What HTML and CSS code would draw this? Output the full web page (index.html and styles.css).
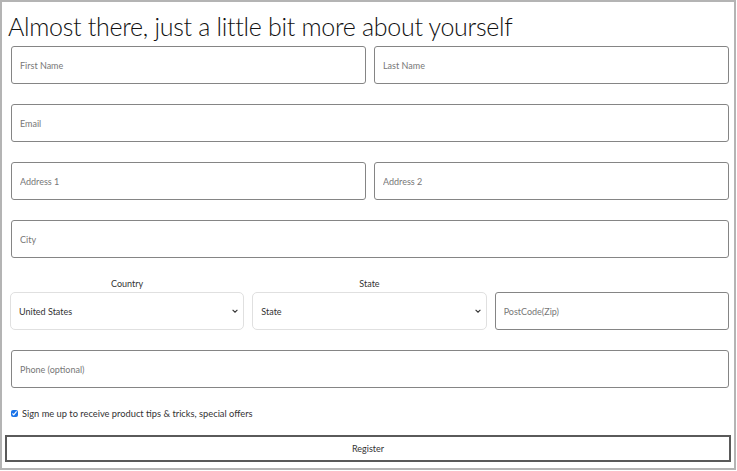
FILE: index.html
```html
<!DOCTYPE html>
<html lang="en">
<head>
  <meta charset="UTF-8" />
  <meta name="viewport" content="width=device-width, initial-scale=1.0" />
  <title>Register</title>
  <link rel="stylesheet" href="styles.css">
</head>
<body>
  <div class="register-box">
    <h1>Almost there, just a little bit more about yourself</h1>
    <form class="register-form">
      <div class="row two">
        <input type="text" placeholder="First Name">
        <input type="text" placeholder="Last Name">
      </div>
      <div class="row">
        <input type="text" placeholder="Email">
      </div>
      <div class="row two">
        <input type="text" placeholder="Address 1">
        <input type="text" placeholder="Address 2">
      </div>
      <div class="row">
        <input type="text" placeholder="City">
      </div>
      <div class="row three select-row">
        <div class="select-group">
          <label>Country</label>
          <div class="select-wrap">
            <select>
              <option>United States</option>
            </select>
            <svg class="chevron" viewBox="0 0 10 6" width="6" height="4"><path d="M1 1l4 4 4-4" fill="none" stroke="#333" stroke-width="1.8"/></svg>
          </div>
        </div>
        <div class="select-group">
          <label>State</label>
          <div class="select-wrap">
            <select>
              <option>State</option>
            </select>
            <svg class="chevron" viewBox="0 0 10 6" width="6" height="4"><path d="M1 1l4 4 4-4" fill="none" stroke="#333" stroke-width="1.8"/></svg>
          </div>
        </div>
        <div class="select-group">
          <input type="text" placeholder="PostCode(Zip)">
        </div>
      </div>
      <div class="row">
        <input type="text" placeholder="Phone (optional)">
      </div>
      <div class="checkbox-row">
        <input type="checkbox" id="tips" checked>
        <label for="tips">Sign me up to receive product tips &amp; tricks, special offers</label>
      </div>
      <button type="button" class="register-btn">Register</button>
    </form>
  </div>
</body>
</html>
```

FILE: styles.css
```css
* {
  box-sizing: border-box;
}

body {
  margin: 0;
  font-family: Lato, "Open Sans", sans-serif;
  color: #222;
  background: #fff;
}

.register-box {
  width: 736px;
  height: 470px;
  border: 2px solid #b4b4b4;
  padding: 0 4px;
}

h1 {
  margin: 0 0 0 2px;
  height: 44px;
  font-size: 25px;
  font-weight: 300;
  line-height: 48px;
  color: #111;
  letter-spacing: -0.3px;
}

.register-form {
  display: flex;
  flex-direction: column;
}

.row {
  display: grid;
  grid-template-columns: 1fr;
  gap: 8px;
  margin: 0 1px 20px 5px;
}

.row.two {
  grid-template-columns: 1fr 1fr;
}

.row.three {
  grid-template-columns: 1fr 1fr 1fr;
  margin-left: 4px;
}

input[type="text"] {
  height: 38px;
  width: 100%;
  border: 1px solid #858585;
  border-radius: 3px;
  padding: 0 8px;
  font-family: inherit;
  font-size: 9px;
  color: #333;
}

input::placeholder {
  color: #777;
}

.select-group {
  display: flex;
  flex-direction: column;
  justify-content: flex-end;
}

.select-group label {
  text-align: center;
  font-size: 9px;
  color: #333;
  line-height: 11px;
  margin-bottom: 3px;
}

.select-wrap {
  position: relative;
}

select {
  appearance: none;
  width: 100%;
  height: 38px;
  border: 1px solid #e0e0e0;
  border-radius: 5px;
  background: #fff;
  padding: 0 8px;
  font-family: inherit;
  font-size: 9px;
  color: #333;
}

.chevron {
  position: absolute;
  right: 6px;
  top: 17px;
}

.checkbox-row {
  display: flex;
  align-items: center;
  height: 11px;
  margin: 0 0 16px 5px;
  font-size: 9.3px;
  color: #333;
}

.checkbox-row input {
  width: 7px;
  height: 7px;
  margin: 0 4px 0 0;
  accent-color: #1a73e8;
}

.register-btn {
  height: 27px;
  width: 726px;
  margin-left: -1px;
  border: 2px solid #5a5a5a;
  background: #fff;
  font-family: inherit;
  font-size: 9px;
  color: #333;
}
```
